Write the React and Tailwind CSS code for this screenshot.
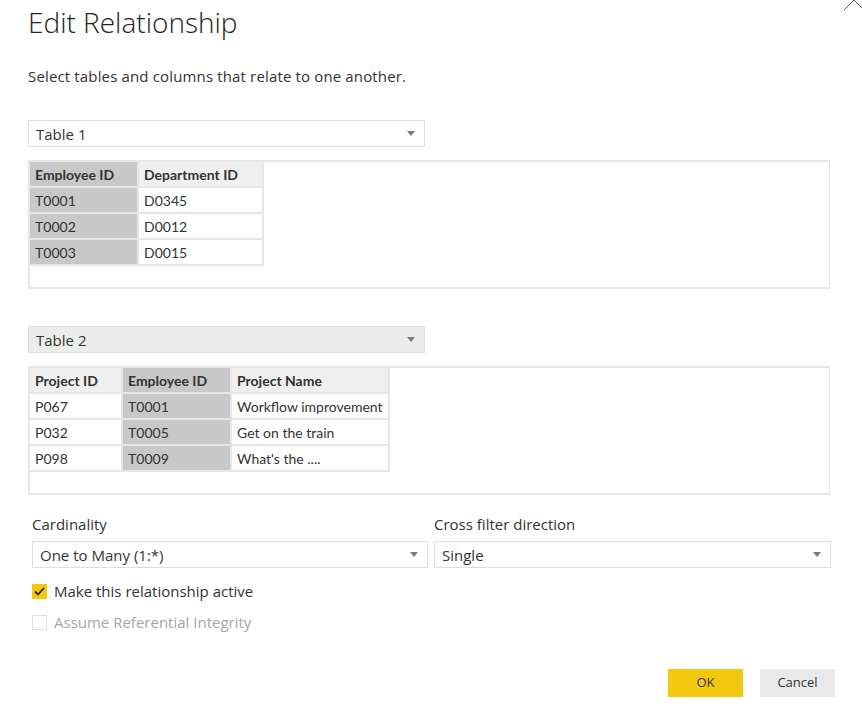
import { useState } from "react";

const Caret = () => (
  <svg width="8" height="5" viewBox="0 0 8 5" className="shrink-0">
    <path d="M0 0 H8 L4 5 Z" fill="#7a7a7a" />
  </svg>
);

function Dropdown({ label, className }) {
  return (
    <div className={"flex items-center justify-between h-[27px] border border-[#dedede] pl-[7px] pr-[9px] " + className}>
      <span className="text-[15px] text-[#333] pt-[1px]">{label}</span>
      <Caret />
    </div>
  );
}

function DataTable({ columns, rows, keyCol }) {
  return (
    <div className="h-[129px] border-2 border-[#e6e6e6] border-r-[1px] p-0">
      <table className="border-collapse text-[14px] text-[#333] font-['Lato',sans-serif]">
        <thead>
          <tr className="h-[25px]">
            {columns.map((c, i) => (
              <th
                key={c.name}
                style={{ width: c.w }}
                className={
                  "text-left font-bold pl-[5px] border-r-2 border-b-2 border-[#e6e6e6] " +
                  (i === keyCol ? "bg-[#c8c8c8]" : "bg-[#efefef]")
                }
              >
                {c.name}
              </th>
            ))}
          </tr>
        </thead>
        <tbody>
          {rows.map((r, ri) => (
            <tr key={ri} className="h-[26px]">
              {r.map((v, i) => (
                <td
                  key={i}
                  className={
                    "pl-[5px] border-r-2 border-b-2 border-[#e6e6e6] " +
                    (i === keyCol ? "bg-[#c8c8c8]" : "bg-white")
                  }
                >
                  {v}
                </td>
              ))}
            </tr>
          ))}
        </tbody>
      </table>
    </div>
  );
}

export default function App() {
  const [active, setActive] = useState(true);

  return (
    <div className="relative w-[862px] h-[712px] overflow-hidden bg-white text-[#252423] font-['Open_Sans',sans-serif]">
      <svg className="absolute left-[840px] top-[-10px]" width="24" height="20" viewBox="0 0 24 20">
        <path d="M4 0 L14 10 M14 10 L24 0 M4 20 L14 10 M14 10 L24 20" stroke="#555" strokeWidth="1" fill="none" />
      </svg>

      <div className="flex flex-col pl-[28px] pr-[32px]">
        <h1 className="pt-[7px] leading-[30px] text-[28px] font-light text-[#252423]">Edit Relationship</h1>

        <p className="mt-[29px] leading-[20px] text-[15px] tracking-[0.15px] text-[#333]">
          Select tables and columns that relate to one another.
        </p>

        <Dropdown label="Table 1" className="mt-[34px] w-[397px] bg-white" />

        <div className="mt-[13px]">
          <DataTable
            keyCol={0}
            columns={[
              { name: "Employee ID", w: 108 },
              { name: "Department ID", w: 125 },
            ]}
            rows={[
              ["T0001", "D0345"],
              ["T0002", "D0012"],
              ["T0003", "D0015"],
            ]}
          />
        </div>

        <Dropdown label="Table 2" className="mt-[37px] w-[397px] bg-[#ececec] border-[#d6d6d6]" />

        <div className="mt-[13px]">
          <DataTable
            keyCol={1}
            columns={[
              { name: "Project ID", w: 92 },
              { name: "Employee ID", w: 109 },
              { name: "Project Name", w: 158 },
            ]}
            rows={[
              ["P067", "T0001", "Workflow improvement"],
              ["P032", "T0005", "Get on the train"],
              ["P098", "T0009", "What's the ...."],
            ]}
          />
        </div>

        <div className="mt-[19px] pl-[4px] grid grid-cols-[396px_397px] gap-x-[6px]">
          <div className="flex flex-col">
            <label className="text-[15px] leading-[20px] text-[#333]">Cardinality</label>
            <Dropdown label="One to Many (1:*)" className="mt-[7px] bg-white" />
          </div>
          <div className="flex flex-col">
            <label className="text-[15px] leading-[20px] text-[#333]">Cross filter direction</label>
            <Dropdown label="Single" className="mt-[7px] bg-white" />
          </div>
        </div>

        <div className="mt-[16px] pl-[4px] flex flex-col gap-[16px]">
          <div onClick={() => setActive(!active)} className="h-[15px] flex items-center gap-[7px] cursor-pointer">
            <span className={"w-[15px] h-[15px] flex items-center justify-center " + (active ? "bg-[#f2c811]" : "border border-[#ccc]")}>
              {active && (
                <svg width="11" height="9" viewBox="0 0 11 9">
                  <path d="M1 4.5 L4 7.5 L10 1" stroke="#252423" strokeWidth="1.8" fill="none" />
                </svg>
              )}
            </span>
            <span className="text-[15px] leading-[15px] text-[#333]">Make this relationship active</span>
          </div>
          <div className="h-[15px] flex items-center gap-[7px]">
            <span className="w-[15px] h-[15px] border border-[#e0e0e0]" />
            <span className="text-[15px] leading-[15px] text-[#a6a6a6]">Assume Referential Integrity</span>
          </div>
        </div>

        <div className="mt-[39px] flex justify-end gap-[17px] mr-[-5px]">
          <button className="w-[75px] h-[28px] bg-[#f2c811] text-[13px] text-[#333]">OK</button>
          <button className="w-[75px] h-[28px] bg-[#e9e9e9] text-[13px] text-[#333]">Cancel</button>
        </div>
      </div>
    </div>
  );
}
